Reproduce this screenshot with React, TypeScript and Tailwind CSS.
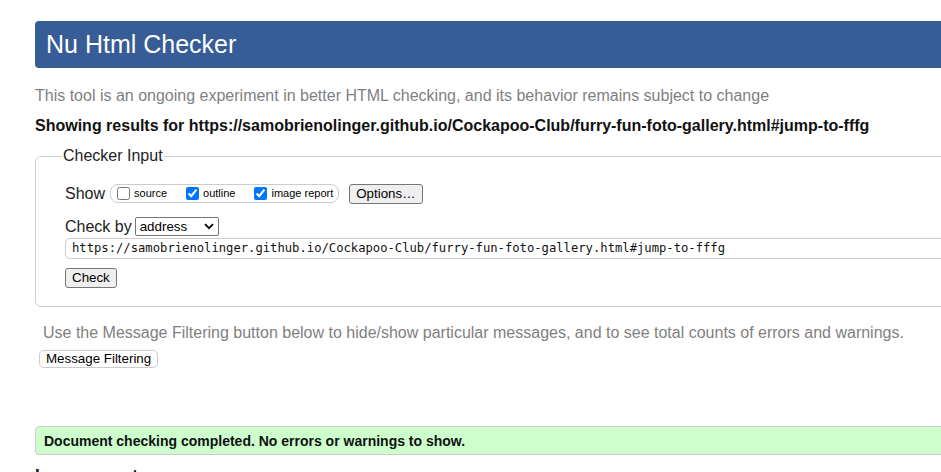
import React from "react";

const sans = "font-['Liberation_Sans',Arial,sans-serif]";

function Check({ label, checked }: { label: string; checked?: boolean }) {
  return (
    <label className="flex items-center">
      <input type="checkbox" defaultChecked={checked} className="m-0 w-[13px] h-[13px]" />
      <span className="ml-[4px] text-[11px] leading-[13px] text-black">{label}</span>
    </label>
  );
}

export default function App() {
  const url = "https://samobrienolinger.github.io/Cockapoo-Club/furry-fun-foto-gallery.html#jump-to-fffg";
  return (
    <div className={`w-[941px] h-[472px] overflow-hidden bg-white ${sans}`}>
      <div className="w-[1200px] pt-[21px] pl-[35px]">
        <header className="h-[47px] bg-[#365d95] rounded-l-[4px] pl-[11px] pt-[9px]">
          <h1 className="text-[25px] leading-[29px] text-white font-normal">Nu Html Checker</h1>
        </header>
        <p className="mt-[19px] text-[16px] leading-[18px] text-[#7f7f7f]">
          This tool is an ongoing experiment in better HTML checking, and its behavior remains subject to change
        </p>
        <p className="mt-[12px] text-[16px] leading-[18px] font-bold text-[#111]">
          Showing results for {url}
        </p>
        <fieldset className="mt-[12px] w-[1000px] border border-[#cccccc] rounded-[6px] pl-[29px] pt-[18px] pb-[17px]">
          <legend className="-ml-[3px] px-[1px] text-[16px] leading-[18px] text-[#222]">Checker Input</legend>
          <div className="flex items-center h-[21px]">
            <span className="text-[16px] leading-[18px] text-[#222]">Show</span>
            <div className="ml-[5px] flex items-center h-[19px] border border-[#cccccc] rounded-[8px] pl-[6px] pr-[5px]">
              <Check label="source" />
              <div className="w-[19px]" />
              <Check label="outline" checked />
              <div className="w-[19px]" />
              <Check label="image report" checked />
            </div>
            <button className="ml-[10px] h-[20px] px-[6px] bg-[#efefef] border border-[#767676] rounded-[3px] text-[13.33px] leading-[16px] text-black">
              Options…
            </button>
          </div>
          <div className="mt-[13px] flex items-center h-[19px]">
            <span className="text-[16px] leading-[18px] text-[#222]">Check by</span>
            <div className="ml-[3px] w-[84px] h-[19px] border border-[#767676] rounded-[2px] flex items-center justify-between pl-[4px] pr-[4px]">
              <span className="text-[13.33px] leading-[16px] text-black">address</span>
              <svg width="10" height="7" viewBox="0 0 10 7">
                <path d="M1 1.2 L5 5.2 L9 1.2" fill="none" stroke="#000" strokeWidth="1.8" />
              </svg>
            </div>
          </div>
          <div className="mt-[2px] h-[21px] w-[1000px] border border-[#cccccc] rounded-l-[5px] pl-[6px] flex items-center">
            <span className="font-['DejaVu_Sans_Mono',monospace] text-[12.2px] leading-[15px] text-[#111]">{url}</span>
          </div>
          <button className="mt-[9px] h-[20px] px-[6px] bg-[#efefef] border border-[#767676] rounded-[3px] text-[13.33px] leading-[16px] text-black">
            Check
          </button>
        </fieldset>
        <p className="mt-[17px] ml-[8px] text-[16px] leading-[18px] text-[#7f7f7f]">
          Use the Message Filtering button below to hide/show particular messages, and to see total counts of errors and warnings.
        </p>
        <button className="mt-[8px] ml-[4px] h-[18px] px-[6px] bg-white border border-[#cccccc] rounded-[5px] text-[13.33px] leading-[16px] text-black">
          Message Filtering
        </button>
        <div className="mt-[56px] h-[29px] w-[1000px] bg-[#ccffcc] border border-[#cccccc] rounded-l-[4px] pl-[8px] flex items-center">
          <span className="text-[14px] leading-[16px] font-bold text-[#111]">
            Document checking completed. No errors or warnings to show.
          </span>
        </div>
        <h2 className="mt-[11px] text-[17px] leading-[20px] font-bold text-[#111]">Image report</h2>
      </div>
    </div>
  );
}
